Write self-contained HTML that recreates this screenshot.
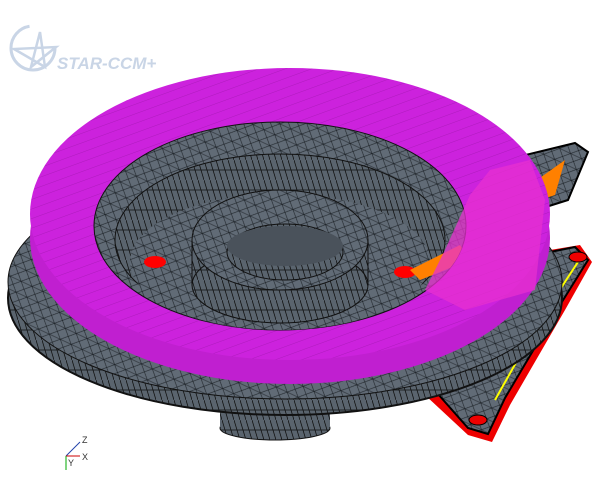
<!DOCTYPE html>
<html><head><style>
html,body{margin:0;padding:0;background:#fff;width:600px;height:500px;overflow:hidden}
svg{display:block}
</style></head><body>
<svg width="600" height="500" viewBox="0 0 600 500" xmlns="http://www.w3.org/2000/svg">
<defs>
<pattern id="mesh" width="12" height="12" patternUnits="userSpaceOnUse" patternTransform="rotate(25)">
<rect width="12" height="12" fill="#616b76"/>
<path d="M0 0L12 12M0 12L12 0M0 6H12" stroke="#1a1f24" stroke-width="0.6"/>
</pattern>
<pattern id="side" width="6" height="20" patternUnits="userSpaceOnUse">
<rect width="6" height="20" fill="#5a646e"/>
<path d="M0 0L6 20M0 10H6" stroke="#111" stroke-width="0.8"/>
</pattern>
<pattern id="mag" width="9" height="9" patternUnits="userSpaceOnUse" patternTransform="rotate(70)">
<rect width="9" height="9" fill="#cc22dd"/>
<path d="M0 0V9" stroke="#9a16a8" stroke-width="0.6"/>
</pattern>
<clipPath id="hole"><ellipse cx="280" cy="226" rx="186" ry="104"/></clipPath>
</defs>
<!-- logo -->
<g fill="none" stroke="#c9d5e6" stroke-width="3">
<ellipse cx="33" cy="48" rx="22" ry="22" stroke-dasharray="100 40"/>
<path d="M40 32L31 67L56 47L14 49L45 67Z" stroke-width="2.5"/>
</g>
<text x="57" y="69" font-family="Liberation Sans,sans-serif" font-weight="bold" font-style="italic" font-size="17" fill="#c9d5e6">STAR-CCM+</text>
<!-- bottom stub -->
<ellipse cx="275" cy="428" rx="55" ry="12" fill="url(#side)" stroke="#111"/>
<rect x="220" y="405" width="110" height="22" fill="url(#side)"/>
<!-- caliper lower -->
<path d="M425 395L468 435L492 442L510 405L565 310L592 262L580 245L550 250L530 300Z" fill="#e00"/>
<path d="M430 385L468 428L488 434L505 398L560 305L588 260L575 247L550 252L520 300Z" fill="url(#mesh)" stroke="#000" stroke-width="2"/>
<path d="M495 400L540 320L578 262" stroke="#ff0" stroke-width="2" fill="none"/>
<path d="M470 380L478 350L486 370L494 335L500 360L508 325" stroke="#e00" stroke-width="2" fill="none"/>
<ellipse cx="578" cy="257" rx="9" ry="5" fill="#e00" stroke="#000"/>
<ellipse cx="478" cy="420" rx="9" ry="5" fill="#e00" stroke="#000"/>
<!-- caliper upper -->
<path d="M505 160L575 143L588 152L568 200L530 212Z" fill="url(#mesh)" stroke="#000" stroke-width="2"/>
<path d="M530 185L565 160L555 195L540 200Z" fill="#ff8000"/>
<!-- lower disc -->
<ellipse cx="285" cy="298" rx="277" ry="117" fill="url(#side)" stroke="#111" stroke-width="2"/>
<ellipse cx="285" cy="282" rx="277" ry="117" fill="url(#mesh)" stroke="#111" stroke-width="1"/>
<!-- magenta side band -->
<ellipse cx="290" cy="238" rx="260" ry="146" fill="#c01fd0"/>
<!-- magenta top -->
<ellipse cx="290" cy="214" rx="260" ry="146" fill="url(#mag)"/>
<!-- interior -->
<ellipse cx="280" cy="226" rx="186" ry="104" fill="url(#mesh)" stroke="#111"/>
<g clip-path="url(#hole)">
<ellipse cx="280" cy="240" rx="165" ry="86" fill="url(#side)" stroke="#111"/>
<ellipse cx="280" cy="262" rx="150" ry="68" fill="url(#mesh)"/>
<rect x="192" y="240" width="176" height="45" fill="url(#side)" stroke="#111"/>
<ellipse cx="280" cy="285" rx="88" ry="38" fill="url(#side)" stroke="#111"/>
<ellipse cx="280" cy="240" rx="88" ry="50" fill="url(#mesh)" stroke="#111"/>
<ellipse cx="285" cy="252" rx="58" ry="28" fill="url(#side)" stroke="#111"/>
<ellipse cx="285" cy="246" rx="58" ry="20" fill="#4a525b"/>
<ellipse cx="155" cy="262" rx="11" ry="6" fill="#f00"/>
<ellipse cx="405" cy="272" rx="11" ry="6" fill="#f00"/>
<path d="M410 270L460 245L470 260L420 280Z" fill="#ff8000"/>
</g>
<!-- caliper pad through magenta -->
<path d="M470 195L490 170L530 160L545 200L535 290L465 310L425 290L445 250Z" fill="#e830d0" opacity="0.75"/>
<!-- axes -->
<g font-family="Liberation Sans,sans-serif" font-size="9" fill="#333">
<line x1="66" y1="456" x2="80" y2="442" stroke="#2244aa"/>
<line x1="66" y1="456" x2="80" y2="456" stroke="#c00"/>
<line x1="66" y1="456" x2="66" y2="470" stroke="#0a0"/>
<text x="82" y="443">Z</text><text x="82" y="460">X</text><text x="68" y="466">Y</text>
</g>
</svg>
</body></html>
